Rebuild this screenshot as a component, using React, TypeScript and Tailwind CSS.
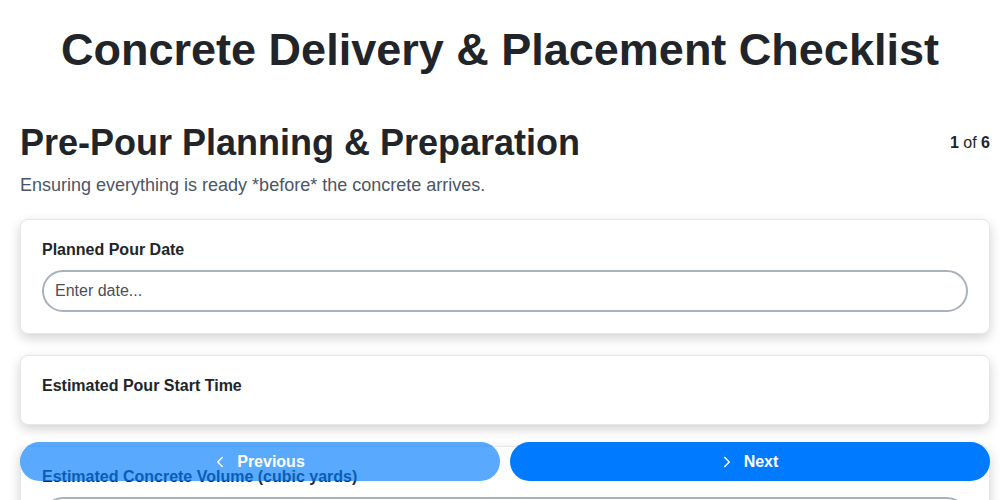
import { ChevronLeft, ChevronRight } from "lucide-react";

const Field = ({ label, placeholder, gap }: { label: string; placeholder?: string; gap?: boolean }) => (
  <div className="rounded-lg border border-gray-200 bg-white px-[21px] pt-[20px] pb-[21px] shadow-[0_4px_12px_rgba(0,0,0,0.18)]">
    <label className="block text-[16px] font-bold leading-[20px] text-[#212529]">{label}</label>
    {placeholder !== undefined ? (
      <input
        placeholder={placeholder}
        className="mt-[10px] block h-[42px] w-full rounded-full border-2 border-[#a9b1ba] bg-white px-[11px] text-[16px] text-[#212529] outline-none placeholder:text-[#4a4f55]"
      />
    ) : (
      <div className={gap ? "h-[7px]" : ""} />
    )}
  </div>
);

const App = () => {
  return (
    <div
      className="h-screen overflow-hidden bg-white"
      style={{ fontFamily: '"Liberation Sans", Arial, sans-serif' }}
    >
      <h1 className="px-[20px] pt-[23px] text-center text-[45px] font-bold leading-[54px] text-[#212529]">
        Concrete Delivery &amp; Placement Checklist
      </h1>
      <div className="pl-[20px] pr-[10px]">
        <div className="mt-[44px] flex items-center justify-between">
          <h2 className="text-[36px] font-bold leading-[44px] text-[#212529]">
            Pre-Pour Planning &amp; Preparation
          </h2>
          <span className="text-[16px] text-[#212529]">
            <b>1</b> of <b>6</b>
          </span>
        </div>
        <p className="mt-[9px] text-[18px] leading-[22px] text-[#4a5568]">
          Ensuring everything is ready *before* the concrete arrives.
        </p>
        <div className="mt-[23px] flex flex-col gap-[21px]">
          <Field label="Planned Pour Date" placeholder="Enter date..." />
          <Field label="Estimated Pour Start Time" gap />
          <Field label="Estimated Concrete Volume (cubic yards)" placeholder="" />
        </div>
      </div>
      <div className="fixed bottom-[19px] left-[20px] right-[10px] flex gap-[10px]">
        <button className="flex h-[39px] flex-1 items-center justify-center gap-[8px] rounded-[20px] bg-[#007bff] pr-[4px] text-[16px] font-bold text-white opacity-65">
          <ChevronLeft size={18} strokeWidth={2} />
          Previous
        </button>
        <button className="flex h-[39px] flex-1 items-center justify-center gap-[8px] rounded-[20px] bg-[#007bff] pr-[4px] text-[16px] font-bold text-white">
          <ChevronRight size={18} strokeWidth={2} />
          Next
        </button>
      </div>
    </div>
  );
};

export default App;
